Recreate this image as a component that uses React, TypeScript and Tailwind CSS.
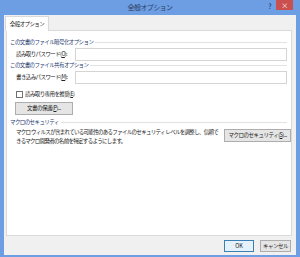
const font = { fontFamily: '"Noto Sans CJK JP", "Noto Sans", sans-serif' }

const Section = ({ title }: { title: string }) => (
  <div className="flex items-center gap-[2px] h-[9px] text-[5.5px] tracking-[-0.6px] text-[#1e3a6e]">
    <span className="whitespace-nowrap">{title}</span>
    <div className="flex-1 h-px bg-[#e2e2e2]" />
  </div>
)

const Btn = ({ children, w }: { children: React.ReactNode; w: string }) => (
  <div className={`${w} h-[13px] border border-[#adadad] bg-[#e5e5e5] flex items-center justify-center text-[5.5px] tracking-[-0.5px] text-[#222]`}>
    {children}
  </div>
)

export default function App() {
  return (
    <div className="w-[300px] h-[257px] bg-[#6d9de2] flex flex-col px-[4px] pb-[2px]" style={font}>
      <div className="h-[15px] relative flex items-center justify-center text-[7px] tracking-[-0.6px] text-[#2c3e66]">
        全般オプション
        <span className="absolute right-[25px] top-[1px] text-[7px] text-[#1f2f55]">?</span>
        <div className="absolute right-[3px] top-0 w-[17px] h-[10px] bg-[#c9504e] flex items-center justify-center text-[7px] text-white leading-none">
          ×
        </div>
      </div>
      <div className="flex-1 bg-[#f0f0f0] flex flex-col pl-[2px] pr-[4px] pt-[1px]">
        <div className="flex h-[14px]">
          <div className="ml-[-1px] w-[44px] bg-white border border-b-0 border-[#d9d9d9] flex items-center justify-center text-[5.5px] tracking-[-0.6px] text-[#222] relative z-10 mb-[-1px]">
            全般オプション
          </div>
        </div>
        <div className="h-[206px] bg-white border border-[#d9d9d9] flex flex-col pl-[3px] pr-[4px] pt-[7px] text-[#222]">
          <Section title="この文書のファイル暗号化オプション" />
          <div className="flex items-center h-[13px] mt-[1px] pl-[6px]">
            <span className="w-[59px] text-[5.5px] tracking-[-0.6px]">読み取りパスワード(<u>O</u>):</span>
            <div className="flex-1 h-[13px] border border-[#d4d4d4] bg-white" />
          </div>
          <Section title="この文書のファイル共有オプション" />
          <div className="flex items-center h-[13px] mt-[1px] pl-[6px]">
            <span className="w-[59px] text-[5.5px] tracking-[-0.6px]">書き込みパスワード(<u>M</u>):</span>
            <div className="flex-1 h-[13px] border border-[#d4d4d4] bg-white" />
          </div>
          <div className="flex items-center gap-[2px] mt-[6px] pl-[6px] h-[9px] text-[5.5px] tracking-[-0.6px]">
            <div className="w-[7px] h-[7px] border border-[#707070] bg-white" />
            <span>読み取り専用を推奨(<u>E</u>)</span>
          </div>
          <div className="pl-[5px] mt-[3px]">
            <Btn w="w-[58px]">
              文書の保護(<u>P</u>)...
            </Btn>
          </div>
          <div className="mt-[3px]">
            <Section title="マクロのセキュリティ" />
          </div>
          <div className="flex items-start pl-[6px] mt-[1px]">
            <p className="flex-1 text-[5.5px] leading-[9px] tracking-[-0.7px] whitespace-nowrap">
              マクロ ウィルスが含まれている可能性のあるファイルのセキュリティ レベルを調整し、信頼で
              <br />
              きるマクロ開発者の名前を特定するようにします。
            </p>
            <div className="ml-[6px] mt-[1px]">
              <Btn w="w-[67px]">
                マクロのセキュリティ(<u>S</u>)...
              </Btn>
            </div>
          </div>
        </div>
        <div className="flex justify-end gap-[6px] mt-[4px] pr-[1px]">
          <div className="w-[30px] h-[12px] border border-[#3c7fb1] bg-[#e5f1fb] flex items-center justify-center text-[5.5px] text-[#222]">
            OK
          </div>
          <div className="w-[31px] h-[12px] border border-[#adadad] bg-[#e5e5e5] flex items-center justify-center text-[5.5px] tracking-[-0.5px] text-[#222]">
            キャンセル
          </div>
        </div>
      </div>
    </div>
  )
}
